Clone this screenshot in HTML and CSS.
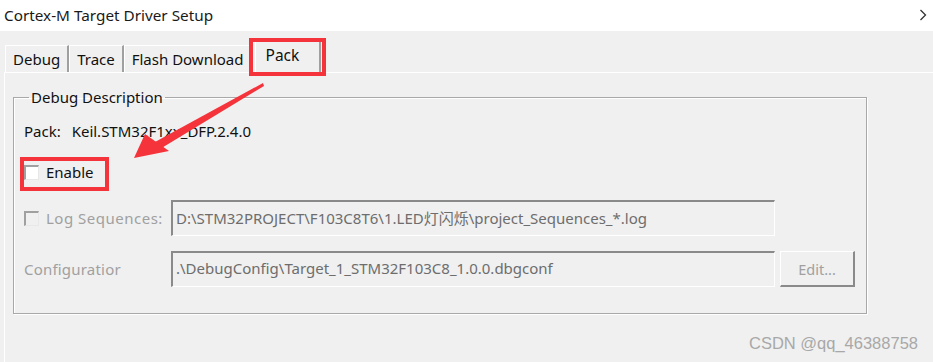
FILE: index.html
```html
<!DOCTYPE html>
<html lang="en">
<head>
  <meta charset="UTF-8">
  <title>Cortex-M Target Driver Setup</title>
  <link rel="stylesheet" href="styles.css">
</head>
<body>

<div class="window">
  <div class="titlebar">
    <span class="title">Cortex-M Target Driver Setup</span>
    <svg class="close" width="8" height="12" viewBox="0 0 8 12">
      <polyline points="1.5,1 6.5,6 1.5,11" fill="none" stroke="#333" stroke-width="1.3"/>
    </svg>
  </div>

  <div class="dialog">
    <div class="tabs">
      <div class="tab">Debug</div>
      <div class="tab">Trace</div>
      <div class="tab">Flash Download</div>
      <div class="tab active">Pack</div>
    </div>

    <div class="panel">
      <fieldset class="group">
        <legend>Debug Description</legend>
        <div class="pack-line"><span class="lbl">Pack:</span> Keil.STM32F1xx_DFP.2.4.0</div>

        <label class="check enable"><span class="box"></span>Enable</label>

        <div class="row">
          <label class="check disabled"><span class="box"></span>Log Sequences:</label>
          <div class="field">D:\STM32PROJECT\F103C8T6\1.LED灯闪烁\project_Sequences_*.log</div>
        </div>

        <div class="row">
          <span class="row-label">Configuratior</span>
          <div class="field">.\DebugConfig\Target_1_STM32F103C8_1.0.0.dbgconf</div>
          <button class="edit-btn">Edit...</button>
        </div>
      </fieldset>
    </div>
  </div>

  <!-- annotations drawn over the screenshot -->
  <div class="mark mark-pack"></div>
  <div class="mark mark-enable"></div>
  <svg class="arrow" width="933" height="362" viewBox="0 0 933 362">
    <polygon points="263,83 264,86 160,149 155,142" fill="#f5333a"/>
    <polygon points="134,158 145,134 169,151" fill="#f5333a"/>
  </svg>
  <div class="watermark">CSDN @qq_46388758</div>
</div>

</body>
</html>
```

FILE: styles.css
```css
* { box-sizing: border-box; }
body {
  margin: 0;
  background: #f0f0f0;
  font-family: 'Noto Sans', 'Noto Sans CJK SC', sans-serif;
  font-size: 15px;
  color: #000;
}
.window {
  position: relative;
  width: 933px;
  height: 362px;
  overflow: hidden;
}
.titlebar {
  height: 31px;
  background: #fff;
  display: flex;
  align-items: center;
  justify-content: space-between;
  padding: 0 6px 2px 4px;
}
.title {
  font-size: 15.3px;
  color: #1a1a1a;
}
.close {
  display: block;
}
.dialog {
  padding: 10px 0 0 4px;
}
.tabs {
  display: flex;
  align-items: flex-end;
  height: 31px;
  padding-left: 1px;
}
.tab {
  height: 27px;
  padding: 3px 7px 0 7px;
  border-left: 1px solid #fff;
  border-top: 1px solid #fff;
  border-right: 2px solid #a0a0a0;
  color: #111;
  font-size: 15px;
}
.tab.active {
  height: 31px;
  padding: 2px 10px 0 10px;
  margin-left: 2px;
  background: #f0f0f0;
  width: 66px;
  font-size: 15.5px;
}
.panel {
  border-top: 1px solid #fff;
  border-left: 1px solid #fff;
  height: 300px;
  padding: 14px 0 0 8px;
}
.group {
  margin: 0;
  width: 854px;
  height: 227px;
  border: 1px solid #a8a8a8;
  box-shadow: inset 1px 1px 0 #fff, 1px 1px 0 #fff;
  padding: 14px 0 0 10px;
}
.group legend {
  font-size: 15px;
  padding: 0 2px;
  margin-left: 5px;
  color: #111;
}
.pack-line {
  color: #111;
  margin-top: 0;
}
.pack-line .lbl {
  margin-right: 7px;
}
.check {
  display: flex;
  align-items: center;
  gap: 7px;
}
.check .box {
  width: 15px;
  height: 15px;
  background: #fff;
  border-left: 2px solid #a0a0a0;
  border-top: 2px solid #a0a0a0;
  border-right: 1px solid #e8e8e8;
  border-bottom: 1px solid #e8e8e8;
}
.enable {
  margin-top: 21px;
  color: #111;
}
.check.disabled {
  color: #a0a0a0;
  width: 147px;
  letter-spacing: 0.5px;
}
.check.disabled .box {
  background: #f0f0f0;
}
.row {
  display: flex;
  align-items: center;
  margin-top: 18px;
}
.row + .row {
  margin-top: 15px;
}
.row-label {
  width: 147px;
  color: #a0a0a0;
  letter-spacing: 0.2px;
}
.field {
  width: 604px;
  height: 36px;
  border-top: 2px solid #8a8a8a;
  border-left: 2px solid #8a8a8a;
  border-right: 1px solid #fff;
  border-bottom: 1px solid #fff;
  padding: 5px 0 0 3px;
  color: #6d6d6d;
  white-space: nowrap;
}
.edit-btn {
  margin-left: 5px;
  width: 75px;
  height: 36px;
  background: #f0f0f0;
  border-top: 1px solid #fff;
  border-left: 1px solid #fff;
  border-right: 2px solid #8a8a8a;
  border-bottom: 2px solid #8a8a8a;
  color: #a0a0a0;
  font-family: inherit;
  font-size: 14.5px;
}
.mark {
  position: absolute;
  border: 4px solid #f5333a;
}
.mark-pack {
  left: 249px;
  top: 38px;
  width: 77px;
  height: 38px;
}
.mark-enable {
  left: 20px;
  top: 157px;
  width: 89px;
  height: 34px;
}
.arrow {
  position: absolute;
  left: 0;
  top: 0;
}
.watermark {
  position: absolute;
  right: 15px;
  top: 334px;
  font-family: 'Liberation Sans', sans-serif;
  font-size: 16.5px;
  color: #a8a8a8;
}
```
